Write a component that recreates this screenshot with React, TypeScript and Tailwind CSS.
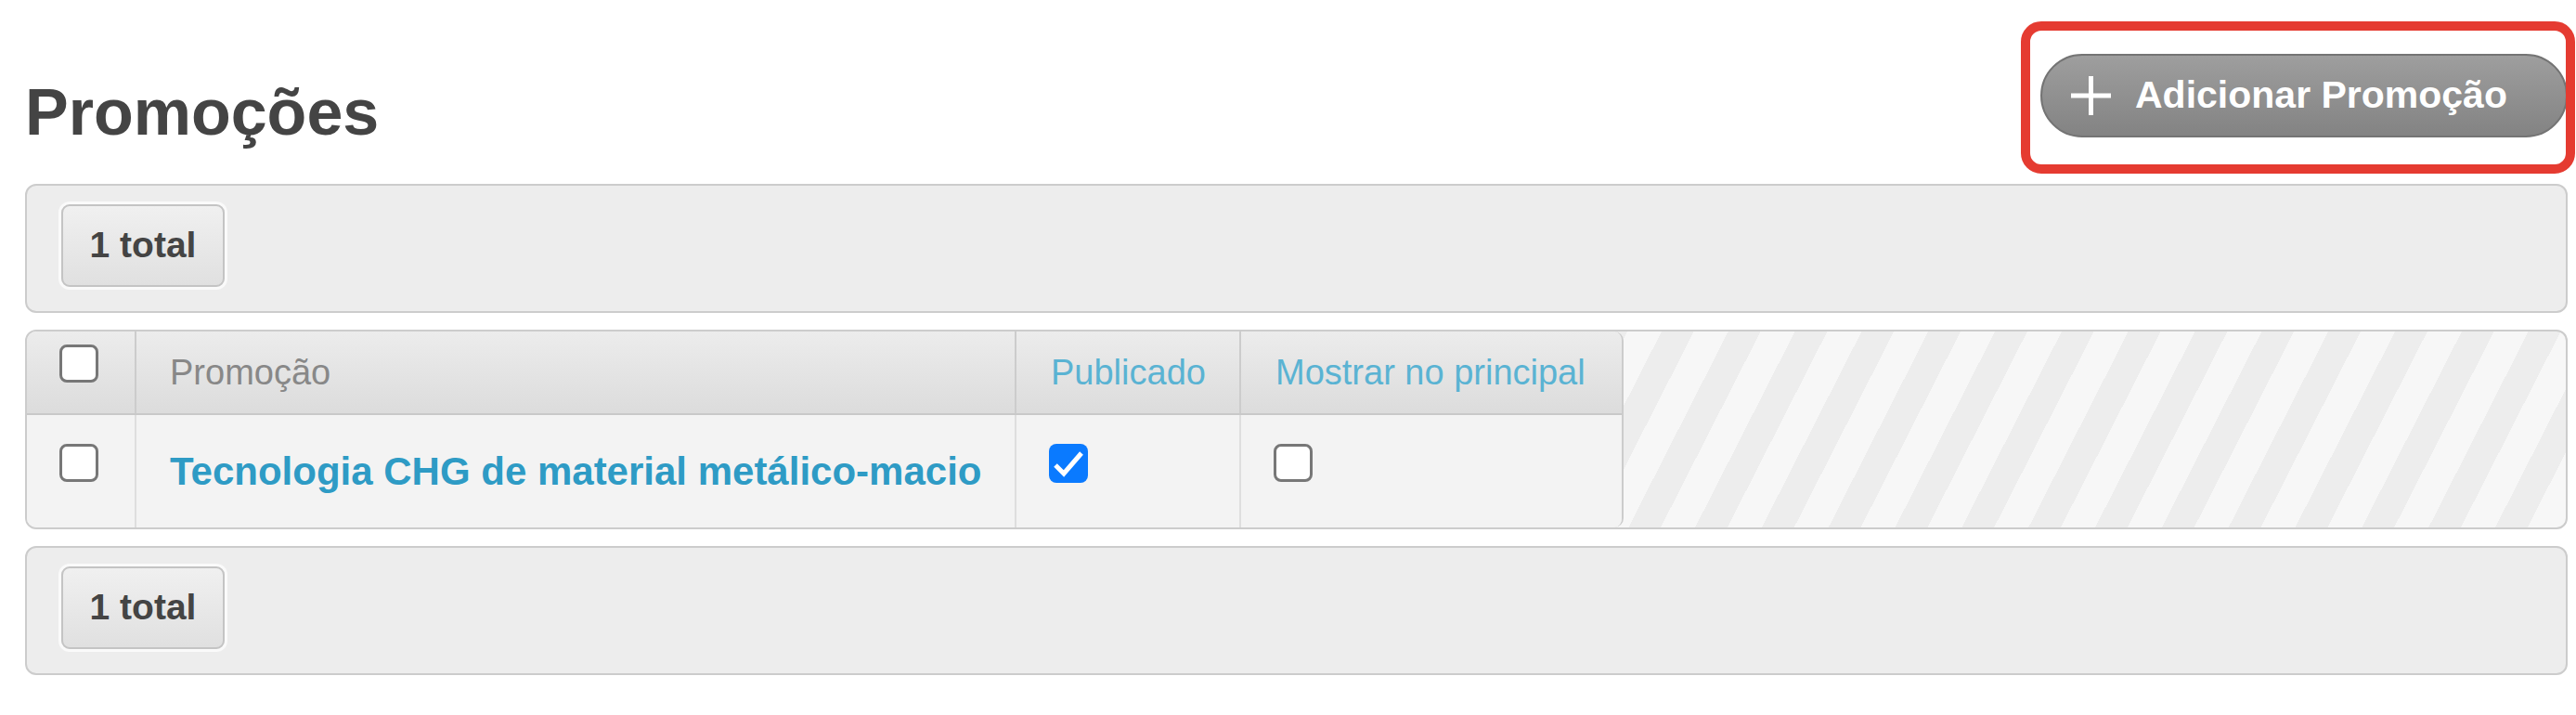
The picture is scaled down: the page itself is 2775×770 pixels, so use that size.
function Checkbox({ checked = false }: { checked?: boolean }) {
  if (checked) {
    return (
      <span className="block h-[42px] w-[42px] rounded-[8px] bg-[#0a7aff]">
        <svg width="42" height="42" viewBox="0 0 42 42">
          <path d="M7 23 L16 32 L35 10" fill="none" stroke="white" strokeWidth="5" />
        </svg>
      </span>
    );
  }
  return <span className="block h-[41px] w-[42px] rounded-[8px] border-[3px] border-[#777] bg-white" />;
}

function TotalBar() {
  return (
    <div className="h-[139px] rounded-[12px] border-2 border-[#cccccc] bg-[#ededed] pl-[37px] pt-[20px]">
      <div className="flex h-[89px] w-[176px] items-center justify-center rounded-[9px] border-2 border-[#c4c4c4] bg-gradient-to-b from-[#f0f0f0] to-[#e0e0e0] text-[39px] font-bold text-[#444] shadow-[0_0_0_3px_#fafafa]">
        1 total
      </div>
    </div>
  );
}

export default function App() {
  return (
    <div className="h-[770px] w-[2775px] bg-white pl-[27px] pr-[9px] font-['Liberation_Sans',Arial,sans-serif]">
      <header className="flex h-[198px] items-start justify-between">
        <h1 className="mt-[86px] text-[70px] font-bold leading-none text-[#444]">Promoções</h1>
        <div className="relative mt-[58px]">
          <button className="flex h-[90px] w-[568px] items-center gap-[26px] rounded-full border-2 border-[#747474] bg-gradient-to-b from-[#9e9e9e] to-[#838383] pl-[31px] text-[41px] font-bold text-white">
            <svg width="43" height="42" viewBox="0 0 43 42" className="blur-[0.6px]">
              <path d="M21.5 0 V42 M0 21 H43" stroke="white" strokeWidth="5" />
            </svg>
            Adicionar Promoção
          </button>
          {/* annotation frame */}
          <div className="pointer-events-none absolute -bottom-[39px] -left-[21px] -right-[8px] -top-[35px] rounded-[22px] border-[10px] border-[#e53b31]" />
        </div>
      </header>

      <TotalBar />

      <div className="mt-[18px] h-[215px] overflow-hidden rounded-[12px] border-2 border-[#cccccc] bg-[image:repeating-linear-gradient(117deg,#f7f7f7_0px,#f7f7f7_33px,#ededed_33px,#ededed_64px)]">
        <div className="w-[1720px] overflow-hidden rounded-r-[10px] border-r-2 border-[#cccccc]">
          <div className="flex h-[90px] border-b-2 border-[#c8c8c8] bg-gradient-to-b from-[#ececec] to-[#dcdcdc] text-[38px]">
            <div className="w-[118px] border-r-2 border-[#cccccc] pl-[35px] pt-[14px]">
              <Checkbox />
            </div>
            <div className="flex w-[948px] items-center border-r-2 border-[#cccccc] pl-[36px] text-[#888]">Promoção</div>
            <div className="flex w-[242px] items-center border-r-2 border-[#cccccc] pl-[37px] text-[#5ab3d3]">Publicado</div>
            <div className="flex w-[410px] items-center pl-[37px] text-[#5ab3d3]">Mostrar no principal</div>
          </div>
          <div className="flex h-[121px] bg-[#f3f3f3]">
            <div className="w-[118px] border-r-2 border-[#dedede] pl-[35px] pt-[31px]">
              <Checkbox />
            </div>
            <div className="flex w-[948px] items-center border-r-2 border-[#dedede] pl-[36px] text-[42px] font-bold text-[#2e9bc5]">
              Tecnologia CHG de material metálico-macio
            </div>
            <div className="w-[242px] border-r-2 border-[#dedede] pl-[35px] pt-[31px]">
              <Checkbox checked />
            </div>
            <div className="w-[410px] pl-[35px] pt-[31px]">
              <Checkbox />
            </div>
          </div>
        </div>
      </div>

      <div className="mt-[18px]">
        <TotalBar />
      </div>
    </div>
  );
}
